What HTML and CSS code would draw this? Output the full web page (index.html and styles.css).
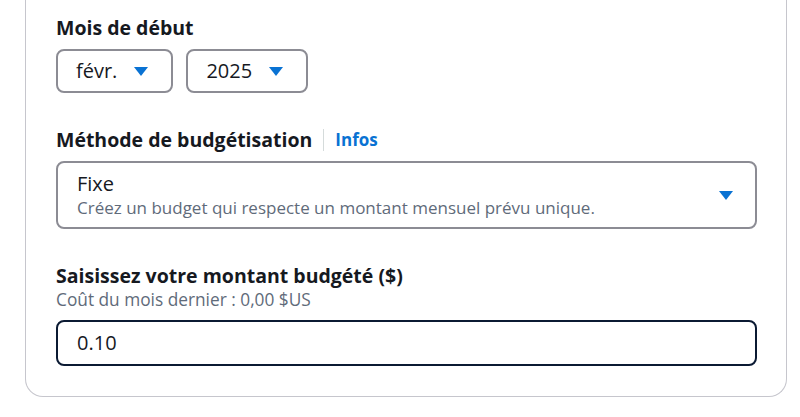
FILE: index.html
```html
<!DOCTYPE html>
<html lang="fr">
<head>
<meta charset="utf-8">
<link rel="stylesheet" href="styles.css">
</head>
<body>
<div class="card">
  <div class="field">
    <div class="label">Mois de début</div>
    <div class="row">
      <div class="select small">
        <span class="value">févr.</span>
        <svg class="caret" width="14" height="9" viewBox="0 0 14 9"><path d="M0 0H14L7 9Z" fill="#0972d3"/></svg>
      </div>
      <div class="select small">
        <span class="value">2025</span>
        <svg class="caret" width="14" height="9" viewBox="0 0 14 9"><path d="M0 0H14L7 9Z" fill="#0972d3"/></svg>
      </div>
    </div>
  </div>

  <div class="field gap-lg">
    <div class="label">Méthode de budgétisation<span class="divider"></span><a class="info">Infos</a></div>
    <div class="select big">
      <div class="stack">
        <span class="value">Fixe</span>
        <span class="desc">Créez un budget qui respecte un montant mensuel prévu unique.</span>
      </div>
      <svg class="caret" width="14" height="9" viewBox="0 0 14 9"><path d="M0 0H14L7 9Z" fill="#0972d3"/></svg>
    </div>
  </div>

  <div class="field gap-lg">
    <div class="label">Saisissez votre montant budgété ($)</div>
    <div class="hint">Coût du mois dernier : 0,00 $US</div>
    <div class="input"><span class="value">0.10</span></div>
  </div>
</div>
</body>
</html>
```

FILE: styles.css
```css
html, body {
  margin: 0;
  padding: 0;
  background: #ffffff;
}
body {
  font-family: "Open Sans", "Noto Sans", sans-serif;
  color: #16191f;
}
.card {
  margin-left: 25px;
  width: 762px;
  box-sizing: border-box;
  border: 1px solid #c6c6cd;
  border-top: none;
  border-radius: 0 0 18px 18px;
  padding: 16px 29px 30px 30px;
}
.field {
  display: flex;
  flex-direction: column;
}
.gap-lg {
  margin-top: 35px;
}
.label {
  font-size: 19.5px;
  line-height: 24px;
  font-weight: 700;
  display: flex;
  align-items: center;
}
.divider {
  display: inline-block;
  width: 1px;
  height: 22px;
  background: #d5dbdb;
  margin: 0 11px 0 11px;
}
.info {
  color: #0972d3;
  font-size: 17px;
  font-weight: 700;
}
.row {
  display: flex;
  gap: 13px;
  margin-top: 9px;
}
.select {
  box-sizing: border-box;
  border: 2px solid #8c8c94;
  border-radius: 8px;
  display: flex;
  align-items: center;
  justify-content: space-between;
  background: #fff;
}
.small {
  height: 44px;
  padding: 0 23px 0 18px;
  gap: 17px;
}
.value {
  font-size: 20px;
  line-height: 24px;
}
.big {
  height: 68px;
  margin-top: 9px;
  padding: 0 22px 0 19px;
}
.stack {
  display: flex;
  flex-direction: column;
  padding-top: 2px;
}
.desc {
  font-size: 17px;
  line-height: 24px;
  color: #5f6b7a;
}
.hint {
  font-size: 17.3px;
  line-height: 20px;
  color: #5f6b7a;
  margin-top: 2px;
}
.input {
  box-sizing: border-box;
  height: 46px;
  margin-top: 10px;
  border: 2px solid #0b1a33;
  border-radius: 8px;
  padding: 0 19px;
  display: flex;
  align-items: center;
}
```
